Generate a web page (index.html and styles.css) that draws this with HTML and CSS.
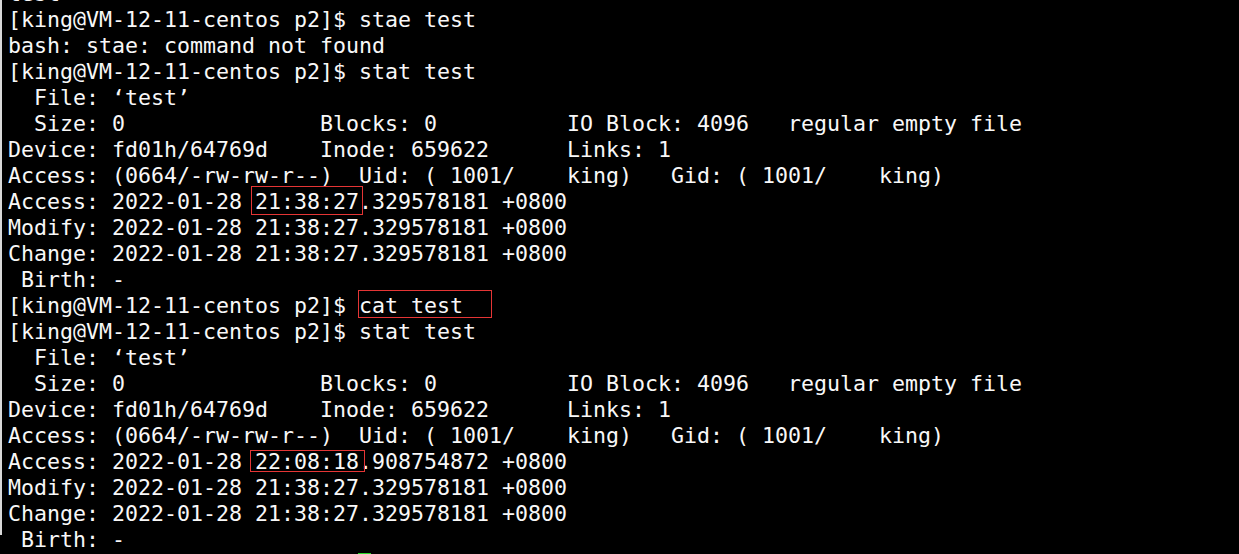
FILE: index.html
```html
<!DOCTYPE html>
<html>
<head>
<meta charset="utf-8">
<link rel="stylesheet" href="styles.css">
</head>
<body>
<div class="term">
<pre class="out">test
[king@VM-12-11-centos p2]$ stae test
bash: stae: command not found
[king@VM-12-11-centos p2]$ stat test
  File: ‘test’
  Size: 0               Blocks: 0          IO Block: 4096   regular empty file
Device: fd01h/64769d    Inode: 659622      Links: 1
Access: (0664/-rw-rw-r--)  Uid: ( 1001/    king)   Gid: ( 1001/    king)
Access: 2022-01-28 <span class="hl hl-a">21:38:27</span>.329578181 +0800
Modify: 2022-01-28 21:38:27.329578181 +0800
Change: 2022-01-28 21:38:27.329578181 +0800
 Birth: -
[king@VM-12-11-centos p2]$ <span class="hl hl-b">cat test</span>
[king@VM-12-11-centos p2]$ stat test
  File: ‘test’
  Size: 0               Blocks: 0          IO Block: 4096   regular empty file
Device: fd01h/64769d    Inode: 659622      Links: 1
Access: (0664/-rw-rw-r--)  Uid: ( 1001/    king)   Gid: ( 1001/    king)
Access: 2022-01-28 <span class="hl hl-c">22:08:18</span>.908754872 +0800
Modify: 2022-01-28 21:38:27.329578181 +0800
Change: 2022-01-28 21:38:27.329578181 +0800
 Birth: -</pre>
<div class="cursor"></div>
</div>
</body>
</html>
```
FILE: styles.css
```css
html, body {
  margin: 0;
  padding: 0;
  background: #000;
  height: 100%;
  overflow: hidden;
}

.term {
  background: #000;
  border-left: 2px solid #d8d8d8;
  height: 100%;
  box-sizing: border-box;
}

.out {
  margin: -19px 0 0 0;
  padding: 0 0 0 6px;
  font-family: "DejaVu Sans Mono", monospace;
  font-size: 21.6px;
  line-height: 26px;
  color: #f8f8f8;
  white-space: pre;
}

.hl {
  position: relative;
}

.hl::after {
  content: "";
  position: absolute;
  border: 1px solid #e53535;
}

.hl-a::after {
  left: -4px;
  right: -4px;
  top: -3px;
  bottom: -1px;
}

.hl-b::after {
  left: -1px;
  right: -29px;
  top: -3px;
  bottom: 0;
}

.hl-c::after {
  left: -5px;
  right: -6px;
  top: 1px;
  bottom: 2px;
}

.cursor {
  margin-left: 356px;
  width: 13px;
  height: 2px;
  background: #2ad62a;
}
```
